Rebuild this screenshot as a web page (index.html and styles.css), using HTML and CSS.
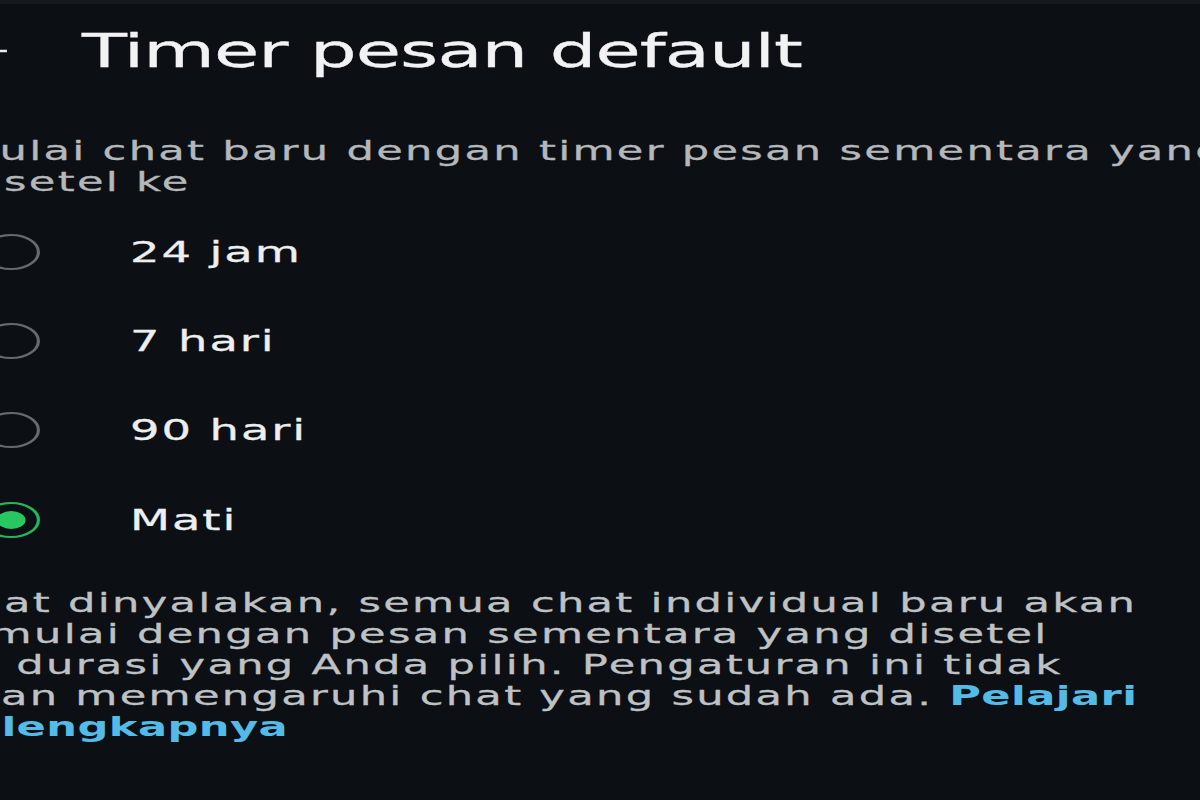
FILE: index.html
```html
<!DOCTYPE html>
<html lang="id">
<head>
<meta charset="utf-8">
<title>Timer pesan default</title>
<link rel="stylesheet" href="styles.css">
</head>
<body>
<div class="screen">
  <header class="appbar">
    <span class="back" aria-label="Kembali">
      <svg viewBox="0 0 24 24" width="28" height="28"><path d="M20 11H7.83l5.59-5.59L12 4l-8 8 8 8 1.41-1.41L7.83 13H20v-2z" fill="#e9edef"/></svg>
    </span>
    <h1 class="title">Timer pesan default</h1>
  </header>

  <p class="intro">Mulai chat baru dengan timer pesan sementara yang<br>disetel ke</p>

  <ul class="options">
    <li class="option"><span class="radio"></span><span class="label">24 jam</span></li>
    <li class="option"><span class="radio"></span><span class="label">7 hari</span></li>
    <li class="option"><span class="radio"></span><span class="label">90 hari</span></li>
    <li class="option"><span class="radio radio-on"></span><span class="label">Mati</span></li>
  </ul>

  <p class="note">Saat dinyalakan, semua chat individual baru akan<br>dimulai dengan pesan sementara yang disetel<br>ke durasi yang Anda pilih. Pengaturan ini tidak<br>akan memengaruhi chat yang sudah ada. <a class="link" href="#">Pelajari<br>selengkapnya</a></p>
</div>
</body>
</html>
```

FILE: styles.css
```css
html, body {
  margin: 0;
  padding: 0;
  background: #0c0f13;
  overflow: hidden;
  width: 1200px;
  height: 800px;
}

body {
  border-top: 4px solid #15181c;
  box-sizing: border-box;
  font-family: "DejaVu Sans", "Liberation Sans", sans-serif;
}

.screen {
  width: 800px;
  margin-left: -40px;
  transform: scaleX(1.6);
  transform-origin: 0 0;
}

.appbar {
  display: flex;
  align-items: center;
  margin-top: 19px;
  height: 56px;
}

.back {
  display: flex;
  margin-left: 6.1px;
  width: 28px;
  height: 28px;
}

.title {
  margin: 0 0 0 42.15px;
  font-size: 46px;
  font-weight: normal;
  line-height: 56px;
  letter-spacing: -0.6px;
  color: #f1f2f3;
  white-space: nowrap;
  -webkit-text-stroke: 0.3px #f1f2f3;
}

.intro,
.note {
  margin: 0;
  font-size: 27px;
  line-height: 31px;
  letter-spacing: 1.43px;
  white-space: nowrap;
}

.intro {
  margin-top: 55.5px;
  color: #b5b8bb;
  -webkit-text-stroke: 0.3px #b5b8bb;
}

.options {
  list-style: none;
  margin: 10.75px 0 0;
  padding: 0;
}

.option {
  display: flex;
  align-items: center;
  height: 89.3px;
}

.radio {
  box-sizing: border-box;
  width: 36px;
  height: 36px;
  margin-left: 14px;
  border: 2.5px solid #66696d;
  border-radius: 50%;
  display: flex;
  align-items: center;
  justify-content: center;
}

.radio-on {
  border-color: #22b75c;
}

.radio-on::after {
  content: "";
  width: 18px;
  height: 18px;
  border-radius: 50%;
  background: #27c862;
}

.label {
  margin-left: 56.25px;
  font-size: 29px;
  letter-spacing: 1.2px;
  color: #eceeef;
  -webkit-text-stroke: 0.3px #eceeef;
}

.note {
  margin-top: 22.5px;
  margin-left: -9px;
  color: #bfc2c5;
  -webkit-text-stroke: 0.3px #bfc2c5;
}

.link {
  color: #53bbe6;
  font-weight: bold;
  text-decoration: none;
  letter-spacing: 0.25px;
  -webkit-text-stroke: 0;
}
```
